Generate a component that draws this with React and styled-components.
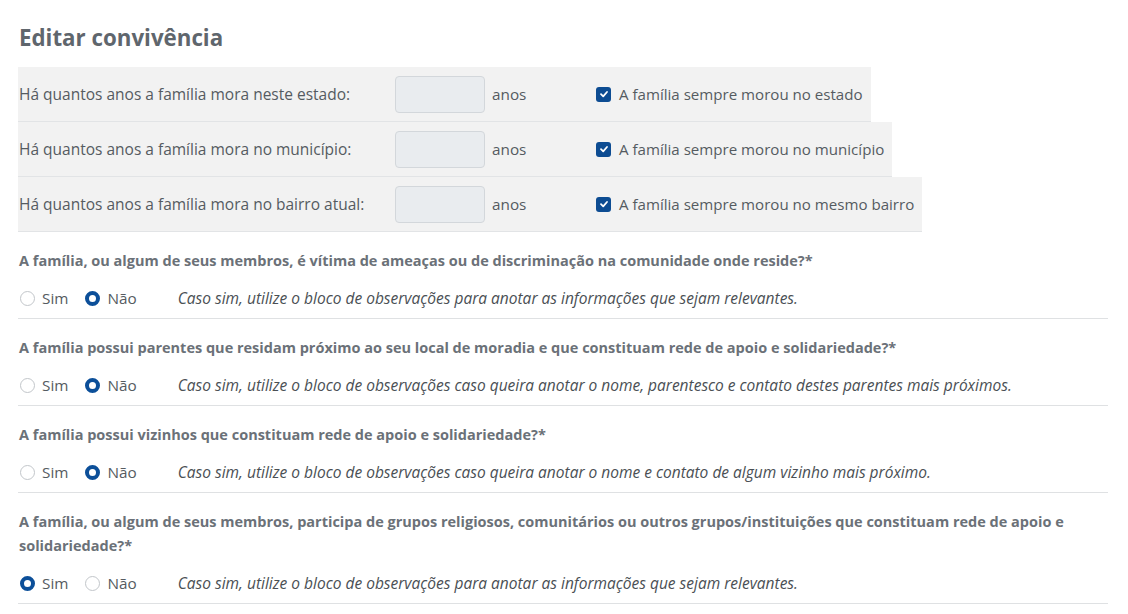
import React from "react";
import styled, { createGlobalStyle } from "styled-components";

const Global = createGlobalStyle`
  html, body { margin: 0; padding: 0; background: #fff; }
  body { font-family: "Open Sans", "Noto Sans", sans-serif; color: #555b61; }
  * { box-sizing: border-box; }
`;

const Page = styled.div`
  padding: 22px 20px 0 18px;
`;

const Title = styled.h2`
  margin: 0 0 13px 1px;
  font-size: 22.3px;
  line-height: 32px;
  font-weight: 700;
  color: #5f666d;
`;

const Table = styled.div`
  display: flex;
  flex-direction: column;
  align-items: flex-start;
`;

const Row = styled.div`
  display: flex;
  align-items: center;
  height: 55px;
  padding-right: 8px;
  background: #f2f2f2;
  border-bottom: 1px solid #e2e4e6;
  font-size: 15.3px;
  color: #555b61;
`;

const LabelCell = styled.div`
  width: 377px;
  padding-left: 1px;
  font-size: 15.5px;
`;

const NumInput = styled.input`
  width: 90px;
  height: 37px;
  background: #e9ecef;
  border: 1px solid #d3d7db;
  border-radius: 4px;
  margin-right: 7px;
`;

const UnitCell = styled.div`
  width: 104px;
`;

const CheckLabel = styled.label`
  display: flex;
  align-items: center;
  gap: 8px;
  font-size: 15.1px;
`;

const CheckBox = styled.span`
  width: 15px;
  height: 15px;
  border-radius: 3px;
  background: #0d4c92;
  display: inline-flex;
  align-items: center;
  justify-content: center;
`;

const Question = styled.div`
  padding: 16px 0 8px;
  width: 1090px;
  border-bottom: 1px solid #dfe1e3;
`;

const QText = styled.div`
  font-size: 14.5px;
  line-height: 24px;
  font-weight: 700;
  color: #6b7178;
  padding: 1px 0 0 1px;
  margin-bottom: -1px;
`;

const Options = styled.div`
  display: flex;
  align-items: center;
  height: 24px;
  margin-top: 14px;
  font-size: 15.3px;
  color: #555b61;
`;

const RadioLabel = styled.label`
  display: flex;
  align-items: center;
  gap: 7px;
  margin-left: 2px;
  margin-right: ${(p) => p.$mr}px;
`;

const Radio = styled.span`
  width: 15px;
  height: 15px;
  border-radius: 50%;
  background: #fff;
  border: ${(p) => (p.$checked ? "4.5px solid #0c4f99" : "1px solid #c2c6ca")};
`;

const Hint = styled.span`
  font-style: italic;
  color: #4a4f54;
  font-size: 15.5px;
`;

const Check = () => (
  <CheckBox>
    <svg width="10" height="10" viewBox="0 0 10 10">
      <path d="M2 5.2 L4.2 7.3 L8 3" fill="none" stroke="#fff" strokeWidth="1.8" strokeLinecap="round" strokeLinejoin="round" />
    </svg>
  </CheckBox>
);

const rows = [
  ["Há quantos anos a família mora neste estado:", "A família sempre morou no estado"],
  ["Há quantos anos a família mora no município:", "A família sempre morou no município"],
  ["Há quantos anos a família mora no bairro atual:", "A família sempre morou no mesmo bairro"],
];

const questions = [
  {
    q: "A família, ou algum de seus membros, é vítima de ameaças ou de discriminação na comunidade onde reside?*",
    sim: false,
    hint: "Caso sim, utilize o bloco de observações para anotar as informações que sejam relevantes.",
  },
  {
    q: "A família possui parentes que residam próximo ao seu local de moradia e que constituam rede de apoio e solidariedade?*",
    sim: false,
    hint: "Caso sim, utilize o bloco de observações caso queira anotar o nome, parentesco e contato destes parentes mais próximos.",
  },
  {
    q: "A família possui vizinhos que constituam rede de apoio e solidariedade?*",
    sim: false,
    hint: "Caso sim, utilize o bloco de observações caso queira anotar o nome e contato de algum vizinho mais próximo.",
  },
  {
    q: "A família, ou algum de seus membros, participa de grupos religiosos, comunitários ou outros grupos/instituições que constituam rede de apoio e solidariedade?*",
    sim: true,
    hint: "Caso sim, utilize o bloco de observações para anotar as informações que sejam relevantes.",
  },
];

export default function App() {
  return (
    <Page>
      <Global />
      <Title>Editar convivência</Title>
      <Table>
        {rows.map(([l, c]) => (
          <Row key={l}>
            <LabelCell>{l}</LabelCell>
            <NumInput type="text" />
            <UnitCell>anos</UnitCell>
            <CheckLabel>
              <Check />
              {c}
            </CheckLabel>
          </Row>
        ))}
      </Table>
      {questions.map((q) => (
        <Question key={q.q}>
          <QText>{q.q}</QText>
          <Options>
            <RadioLabel $mr={15}>
              <Radio $checked={q.sim} />
              Sim
            </RadioLabel>
            <RadioLabel $mr={41}>
              <Radio $checked={!q.sim} />
              Não
            </RadioLabel>
            <Hint>{q.hint}</Hint>
          </Options>
        </Question>
      ))}
    </Page>
  );
}
